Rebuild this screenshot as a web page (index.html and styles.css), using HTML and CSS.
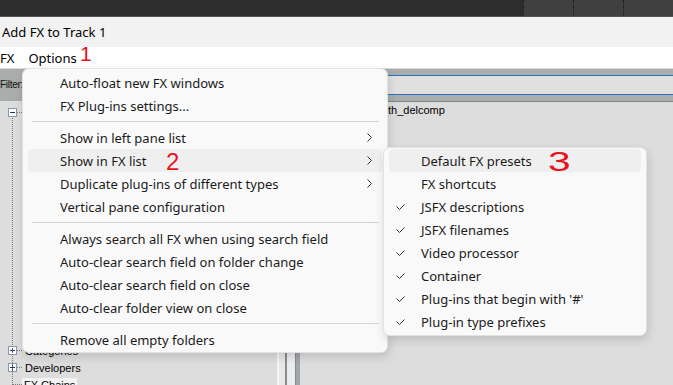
FILE: index.html
```html
<!DOCTYPE html>
<html lang="en">
  <head>
    <meta http-equiv="Content-Type" content="text/html;charset=utf-8" />
    <meta name="viewport" content="width=device-width, initial-scale=1.0" />
    <title>Add FX to Track 1</title>
    <link rel="stylesheet" href="styles.css">
  </head>
  <body>
    <div class="strip">
      <span class="strip__fill"></span>
      <span class="strip__tab"></span>
      <span class="strip__tab"></span>
      <span class="strip__tab"></span>
    </div>
    <div class="titlebar">Add FX to Track 1</div>
    <div class="menubar">
      <span class="menubar__item">FX</span>
      <span class="menubar__item menubar__item--open">Options</span>
    </div>
    <div class="filter">
      <span class="filter__label">Filter:</span>
      <span class="filter__field"></span>
    </div>
    <div class="browser">
      <ul class="tree">
        <li class="tree__row">
          <svg class="tree__box" width="9" height="9" viewBox="0 0 9 9"><rect x="0.5" y="0.5" width="8" height="8" /><path d="M2 4.5h5" /></svg>
          <span class="tree__dots"></span>
        </li>
        <!-- children of the open folder, covered by the popup menu -->
        <li class="tree__group"></li>
        <li class="tree__row">
          <svg class="tree__box" width="9" height="9" viewBox="0 0 9 9"><rect x="0.5" y="0.5" width="8" height="8" /><path d="M2 4.5h5M4.5 2v5" /></svg>
          <span class="tree__dots"></span>
          <span class="tree__label">Categories</span>
        </li>
        <li class="tree__row">
          <svg class="tree__box" width="9" height="9" viewBox="0 0 9 9"><rect x="0.5" y="0.5" width="8" height="8" /><path d="M2 4.5h5M4.5 2v5" /></svg>
          <span class="tree__dots"></span>
          <span class="tree__label">Developers</span>
        </li>
        <li class="tree__row tree__row--leaf">
          <span class="tree__dots tree__dots--long"></span>
          <span class="tree__label tree__label--selected">FX Chains</span>
        </li>
      </ul>
      <div class="splitter"></div>
      <ul class="list">
        <li class="list__row">th_delcomp</li>
      </ul>
    </div>

    <div class="menu menu--main">
      <div class="menu__item"><span class="menu__check"></span><span class="menu__label">Auto-float new FX windows</span></div>
      <div class="menu__item"><span class="menu__check"></span><span class="menu__label">FX Plug-ins settings...</span></div>
      <div class="menu__sep"></div>
      <div class="menu__item"><span class="menu__check"></span><span class="menu__label">Show in left pane list</span>
        <svg class="menu__arrow" width="5" height="9" viewBox="0 0 5 9"><path d="M0.5 0.5l4 4-4 4" /></svg></div>
      <div class="menu__item menu__item--active"><span class="menu__check"></span><span class="menu__label">Show in FX list</span>
        <svg class="menu__arrow" width="5" height="9" viewBox="0 0 5 9"><path d="M0.5 0.5l4 4-4 4" /></svg></div>
      <div class="menu__item"><span class="menu__check"></span><span class="menu__label">Duplicate plug-ins of different types</span>
        <svg class="menu__arrow" width="5" height="9" viewBox="0 0 5 9"><path d="M0.5 0.5l4 4-4 4" /></svg></div>
      <div class="menu__item"><span class="menu__check"></span><span class="menu__label">Vertical pane configuration</span></div>
      <div class="menu__sep"></div>
      <div class="menu__item"><span class="menu__check"></span><span class="menu__label">Always search all FX when using search field</span></div>
      <div class="menu__item"><span class="menu__check"></span><span class="menu__label">Auto-clear search field on folder change</span></div>
      <div class="menu__item"><span class="menu__check"></span><span class="menu__label">Auto-clear search field on close</span></div>
      <div class="menu__item"><span class="menu__check"></span><span class="menu__label">Auto-clear folder view on close</span></div>
      <div class="menu__sep"></div>
      <div class="menu__item"><span class="menu__check"></span><span class="menu__label">Remove all empty folders</span></div>
    </div>

    <div class="menu menu--sub">
      <div class="menu__item menu__item--active"><span class="menu__check"></span><span class="menu__label">Default FX presets</span></div>
      <div class="menu__item"><span class="menu__check"></span><span class="menu__label">FX shortcuts</span></div>
      <div class="menu__item"><span class="menu__check"><svg width="9" height="6" viewBox="0 0 9 6"><path d="M0.5 2.5l3 3 5-5" /></svg></span><span class="menu__label">JSFX descriptions</span></div>
      <div class="menu__item"><span class="menu__check"><svg width="9" height="6" viewBox="0 0 9 6"><path d="M0.5 2.5l3 3 5-5" /></svg></span><span class="menu__label">JSFX filenames</span></div>
      <div class="menu__item"><span class="menu__check"><svg width="9" height="6" viewBox="0 0 9 6"><path d="M0.5 2.5l3 3 5-5" /></svg></span><span class="menu__label">Video processor</span></div>
      <div class="menu__item"><span class="menu__check"><svg width="9" height="6" viewBox="0 0 9 6"><path d="M0.5 2.5l3 3 5-5" /></svg></span><span class="menu__label">Container</span></div>
      <div class="menu__item"><span class="menu__check"><svg width="9" height="6" viewBox="0 0 9 6"><path d="M0.5 2.5l3 3 5-5" /></svg></span><span class="menu__label">Plug-ins that begin with '#'</span></div>
      <div class="menu__item"><span class="menu__check"><svg width="9" height="6" viewBox="0 0 9 6"><path d="M0.5 2.5l3 3 5-5" /></svg></span><span class="menu__label">Plug-in type prefixes</span></div>
    </div>

    <span class="note note--1">1</span>
    <span class="note note--2">2</span>
    <span class="note note--3">3</span>
  </body>
</html>
```

FILE: styles.css
```css
* {
  box-sizing: border-box;
}
body {
  margin: 0;
  width: 673px;
  height: 385px;
  overflow: hidden;
  position: relative;
  font-family: "Noto Sans", "Open Sans", sans-serif;
  font-size: 13px;
  color: #1b1b1b;
  background-color: #dcdddc;
}
ul {
  list-style: none;
  margin: 0;
  padding: 0;
}

/* window chrome */
.strip {
  display: flex;
  height: 17px;
  background-color: #2d2d2d;
  border-bottom: 1px solid #555;
}
.strip__fill {
  flex: 0 0 523px;
}
.strip__tab {
  flex: 0 0 50px;
  background-color: #404040;
  border-left: 1px dotted #161616;
}
.titlebar {
  height: 30px;
  line-height: 30px;
  padding-left: 2px;
  background-color: #f2f2f2;
  color: #000;
}
.menubar {
  display: flex;
  align-items: center;
  height: 22px;
  background-color: #fff;
  border-bottom: 1px solid #d9d9d9;
  color: #000;
}
.menubar__item {
  padding: 0 7px;
}
.menubar__item:first-child {
  padding-left: 0;
}

/* browser panes */
.filter {
  display: flex;
  height: 32px;
  background-color: #a9adab;
}
.filter__label {
  font-family: "Liberation Sans", sans-serif;
  font-size: 10px;
  letter-spacing: -0.3px;
  line-height: 32px;
  color: #111;
}
.filter__field {
  flex: 1;
  height: 20px;
  margin: 6px -2px 0 3px;
  background-color: #dfe0df;
  border-top: 1px solid #2a6fc4;
  border-bottom: 1px solid #2a6fc4;
}
.browser {
  display: grid;
  grid-template-columns: 277px 23px 1fr;
  height: 284px;
}
.tree {
  position: relative;
  padding-top: 3px;
  font-family: "Liberation Sans", sans-serif;
  font-size: 11px;
  color: #000;
}
.tree::before {
  content: "";
  position: absolute;
  left: 12px;
  top: 17px;
  bottom: 0;
  border-left: 1px dotted #7a7a7a;
}
.tree__row {
  display: flex;
  align-items: center;
  height: 17px;
  padding-left: 8px;
  white-space: nowrap;
}
.tree__group {
  height: 221px;
}
.tree__row--leaf {
  padding-left: 12px;
}
.tree__box {
  flex: none;
  fill: #fff;
  stroke: #8797b0;
}
.tree__box path {
  stroke: #1f3366;
}
.tree__dots {
  width: 5px;
  border-top: 1px dotted #7a7a7a;
}
.tree__dots--long {
  width: 10px;
}
.tree__label {
  padding: 1px 2px;
  margin-left: 1px;
}
.tree__label--selected {
  margin-left: 0;
  background-color: #f3f3f3;
}
.splitter {
  background: linear-gradient(
    to right,
    #f6f6f6 0 2px,
    #e7e7e7 2px 8px,
    #8a8a8a 8px 10px,
    #ececec 10px 18px,
    #878c92 18px 19px,
    #a1a6ab 19px 23px
  );
}
.list {
  border-top: 1px solid #7d8287;
  font-family: "Liberation Sans", sans-serif;
  font-size: 11px;
  color: #000;
}
.list__row {
  height: 17px;
  line-height: 17px;
  padding-left: 88px;
  white-space: nowrap;
}

/* popup menus */
.menu {
  position: absolute;
  background-color: #f9f9f9;
  border: 1px solid #e2e2e2;
  border-radius: 7px;
  box-shadow: 1px 4px 10px rgba(0, 0, 0, 0.14);
}
.menu--main {
  left: 22px;
  top: 68px;
  width: 366px;
  padding: 2px 0 1px;
}
.menu--sub {
  left: 383px;
  top: 147px;
  width: 264px;
  padding: 1px 0 2px;
}
.menu__item {
  display: flex;
  align-items: center;
  height: 23px;
  margin: 0 5px;
  padding: 0 10px 0 7px;
  border-radius: 4px;
  white-space: nowrap;
}
.menu__item--active {
  background-color: #efefef;
}
.menu__check {
  flex: 0 0 25px;
  display: flex;
  align-items: center;
}
.menu__check svg {
  fill: none;
  stroke: #333;
  stroke-width: 1;
}
.menu__label {
  flex: 1;
}
.menu__arrow {
  fill: none;
  stroke: #333;
  stroke-width: 1;
}
.menu__sep {
  height: 1px;
  margin: 4px 8px 4px 9px;
  background-color: #d4d4d4;
}

/* red hand-written markers */
.note {
  position: absolute;
  font-family: "Liberation Sans", sans-serif;
  line-height: 1;
  color: #e8141b;
}
.note--1 {
  left: 80px;
  top: 43px;
  font-size: 21px;
}
.note--2 {
  left: 166px;
  top: 150px;
  font-size: 24px;
}
.note--3 {
  left: 548px;
  top: 148px;
  font-size: 28px;
  transform: scaleX(1.45);
  transform-origin: left;
}
```
